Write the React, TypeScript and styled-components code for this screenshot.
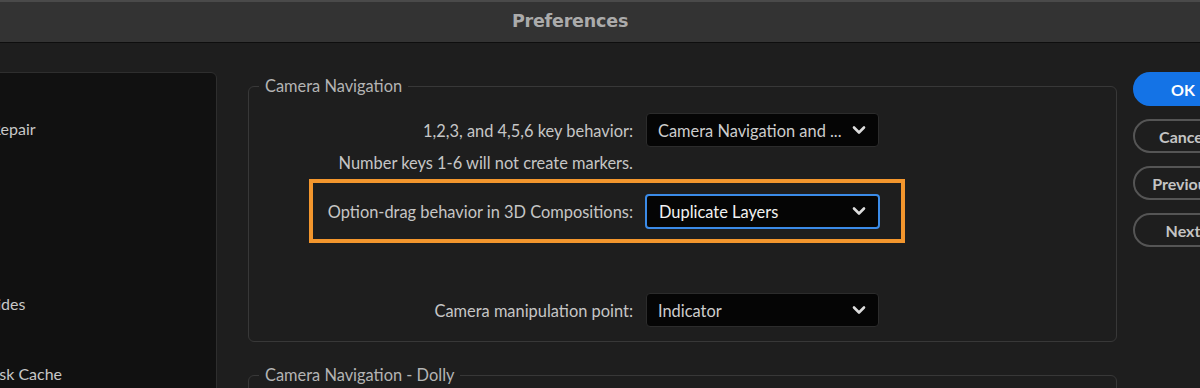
import React from "react";
import styled, { createGlobalStyle } from "styled-components";

const GlobalStyle = createGlobalStyle`
  html, body {
    margin: 0;
    padding: 0;
    background: #1e1e1e;
    overflow: hidden;
  }
  body {
    font-family: Lato, "Open Sans", sans-serif;
  }
`;

const SIDEBAR_ITEMS = [
  "General",
  "Startup & Repair",
  "Previews",
  "Display",
  "Import",
  "Output",
  "Grids & Guides",
  "Labels",
  "Media & Disk Cache",
];

const Chevron = () => (
  <svg width="14" height="10" viewBox="0 0 14 10">
    <polyline
      points="2,2.5 7,7.5 12,2.5"
      fill="none"
      stroke="#dcdcdc"
      strokeWidth="2.6"
      strokeLinecap="round"
      strokeLinejoin="round"
    />
  </svg>
);

interface ISelectProps {
  value: string;
  focused?: boolean;
}

const Select = ({ value, focused }: ISelectProps) => (
  <SelectBox $focused={focused}>
    <SelectText $focused={focused}>{value}</SelectText>
    <Chevron />
  </SelectBox>
);

export default function App() {
  return (
    <>
      <GlobalStyle />
      <Window>
        <TitleBar>
          <Title>Preferences</Title>
        </TitleBar>
        <Body>
          <Sidebar>
            {SIDEBAR_ITEMS.map((item) => (
              <SidebarItem key={item}>{item}</SidebarItem>
            ))}
          </Sidebar>
          <Main>
            <Group>
              <Legend>Camera Navigation</Legend>
              <Row>
                <Label>1,2,3, and 4,5,6 key behavior:</Label>
                <Select value="Camera Navigation and ..." />
              </Row>
              <Note>Number keys 1-6 will not create markers.</Note>
              <Highlight>
                <Label>Option-drag behavior in 3D Compositions:</Label>
                <Select value="Duplicate Layers" focused />
              </Highlight>
              <Row $top={50}>
                <Label>Camera manipulation point:</Label>
                <Select value="Indicator" />
              </Row>
            </Group>
            <Group $gap={23}>
              <Legend>Camera Navigation - Dolly</Legend>
              <Spacer />
            </Group>
          </Main>
          <Buttons>
            <Button $primary>OK</Button>
            <Button>Cancel</Button>
            <Button>Previous</Button>
            <Button>Next</Button>
          </Buttons>
        </Body>
      </Window>
    </>
  );
}

const Window = styled.div`
  width: 1200px;
  height: 388px;
  overflow: hidden;
  background: #1e1e1e;
`;

const TitleBar = styled.div`
  height: 40px;
  border-top: 2px solid #4a4a4a;
  border-bottom: 1px solid #0e0e0e;
  background: #333333;
  display: flex;
  align-items: center;
  justify-content: center;
  padding-right: 60px;
`;

const Title = styled.span`
  font-family: "DejaVu Sans", sans-serif;
  font-weight: bold;
  font-size: 17.5px;
  color: #ababab;
  letter-spacing: -0.2px;
  margin-top: -2px;
`;

const Body = styled.div`
  display: flex;
  align-items: flex-start;
  width: 1300px;
`;

const Sidebar = styled.div`
  flex-shrink: 0;
  margin-left: -120px;
  margin-top: 29px;
  width: 337px;
  height: 400px;
  box-sizing: border-box;
  padding: 3px 0 0 39px;
  background: #111111;
  border: 1px solid #2e2e2e;
  border-radius: 6px;
`;

const SidebarItem = styled.div`
  height: 35px;
  line-height: 35px;
  font-size: 16px;
  color: #c8c8c8;
  white-space: nowrap;
`;

const Main = styled.div`
  flex-shrink: 0;
  margin-left: 31px;
  margin-top: 33px;
  width: 869px;
  display: flex;
  flex-direction: column;
`;

const Group = styled.fieldset<{ $gap?: number }>`
  margin: ${({ $gap }) => $gap ?? 0}px 0 0 0;
  padding: 0 10px 14px 10px;
  border: 1px solid #383838;
  border-radius: 6px;
  min-width: 0;
`;

const Legend = styled.legend`
  padding: 0 6px;
  font-size: 16.4px;
  line-height: 20px;
  color: #b4b4b4;
`;

const Row = styled.div<{ $top?: number }>`
  display: flex;
  align-items: center;
  justify-content: flex-end;
  gap: 13px;
  width: 620px;
  margin-top: ${({ $top }) => $top ?? 17}px;
`;

const Label = styled.span`
  font-size: 16.4px;
  color: #c6c6c6;
  white-space: nowrap;
`;

const Note = styled(Label)`
  display: block;
  width: 374px;
  text-align: right;
  line-height: 20px;
  margin-top: 6px;
`;

const Highlight = styled.div`
  margin: 6px 0 0 50px;
  width: 596px;
  height: 64px;
  box-sizing: border-box;
  border: 4px solid #f3962d;
  padding-right: 21px;
  display: flex;
  align-items: center;
  justify-content: flex-end;
  gap: 12px;
`;

const SelectBox = styled.div<{ $focused?: boolean }>`
  width: ${({ $focused }) => ($focused ? 235 : 233)}px;
  height: ${({ $focused }) => ($focused ? 35 : 34)}px;
  box-sizing: border-box;
  background: #050505;
  border: ${({ $focused }) =>
    $focused ? "2px solid #3b8be8" : "1px solid #2c2c2c"};
  border-radius: 4px;
  display: flex;
  align-items: center;
  justify-content: space-between;
  padding: 0 12px 0 ${({ $focused }) => ($focused ? 12 : 11)}px;
`;

const SelectText = styled.span<{ $focused?: boolean }>`
  font-size: 16.4px;
  color: ${({ $focused }) => ($focused ? "#f2f2f2" : "#cdcdcd")};
  white-space: nowrap;
`;

const Spacer = styled.div`
  height: 40px;
`;

const Buttons = styled.div`
  flex-shrink: 0;
  margin-left: 16px;
  margin-top: 29px;
  display: flex;
  flex-direction: column;
  gap: 13px;
`;

const Button = styled.div<{ $primary?: boolean }>`
  width: 100px;
  height: 34px;
  box-sizing: border-box;
  border-radius: 17px;
  display: flex;
  align-items: center;
  justify-content: center;
  font-size: 16px;
  font-weight: bold;
  background: ${({ $primary }) => ($primary ? "#1473e6" : "transparent")};
  border: 2px solid ${({ $primary }) => ($primary ? "#1473e6" : "#555555")};
  color: ${({ $primary }) => ($primary ? "#ffffff" : "#c4c4c4")};
`;
